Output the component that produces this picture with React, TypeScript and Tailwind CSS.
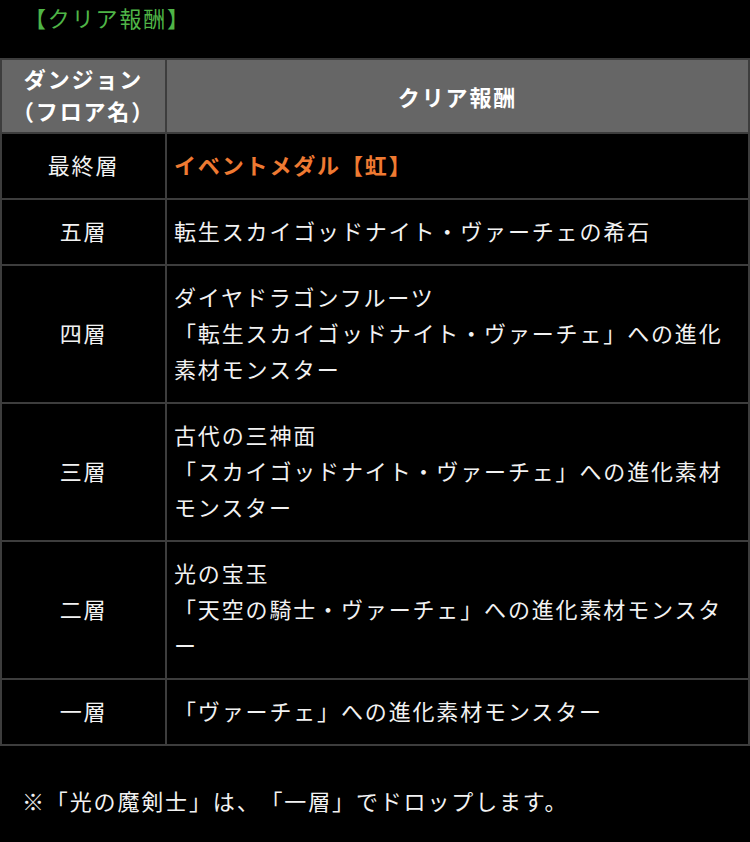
import React from "react";

const rows: { floor: string; lines: React.ReactNode }[] = [
  {
    floor: "最終層",
    lines: <span className="font-bold text-[#ef7a32]">イベントメダル【虹】</span>,
  },
  { floor: "五層", lines: "転生スカイゴッドナイト・ヴァーチェの希石" },
  {
    floor: "四層",
    lines: (
      <>
        ダイヤドラゴンフルーツ
        <br />
        「転生スカイゴッドナイト・ヴァーチェ」への進化素材モンスター
      </>
    ),
  },
  {
    floor: "三層",
    lines: (
      <>
        古代の三神面
        <br />
        「スカイゴッドナイト・ヴァーチェ」への進化素材モンスター
      </>
    ),
  },
  {
    floor: "二層",
    lines: (
      <>
        光の宝玉
        <br />
        「天空の騎士・ヴァーチェ」への進化素材モンスター
      </>
    ),
  },
  { floor: "一層", lines: "「ヴァーチェ」への進化素材モンスター" },
];

export default function App() {
  return (
    <div
      className="w-[750px] h-[842px] bg-black text-[#f2f2f2] text-[22px] leading-[36px] tracking-[1.85px] [text-spacing-trim:space-all]"
      style={{ fontFamily: '"Noto Sans CJK JP", "Noto Sans", sans-serif' }}
    >
      <div className="pl-[24px] h-[58px] text-[#4fb547] leading-[34px]">【クリア報酬】</div>
      <table className="w-[750px] border-collapse table-fixed">
        <colgroup>
          <col className="w-[165px]" />
          <col />
        </colgroup>
        <thead>
          <tr className="bg-[#666666] h-[74px] text-white">
            <th className="border-2 border-[#3d3d3d] font-bold leading-[32px] pt-[2px] pb-[6px] text-center">
              ダンジョン
              <br />
              （フロア名）
            </th>
            <th className="border-2 border-[#3d3d3d] font-bold text-center">クリア報酬</th>
          </tr>
        </thead>
        <tbody>
          {rows.map((r) => (
            <tr key={r.floor}>
              <td className="border-2 border-[#3d3d3d] text-center pt-[12px] pb-[16px] align-middle">{r.floor}</td>
              <td className="border-2 border-[#3d3d3d] pl-[7px] pr-[8px] pt-[12px] pb-[16px] align-middle">{r.lines}</td>
            </tr>
          ))}
        </tbody>
      </table>
      <div className="pl-[22px] pt-[36px]">※「光の魔剣士」は、「一層」でドロップします。</div>
    </div>
  );
}
